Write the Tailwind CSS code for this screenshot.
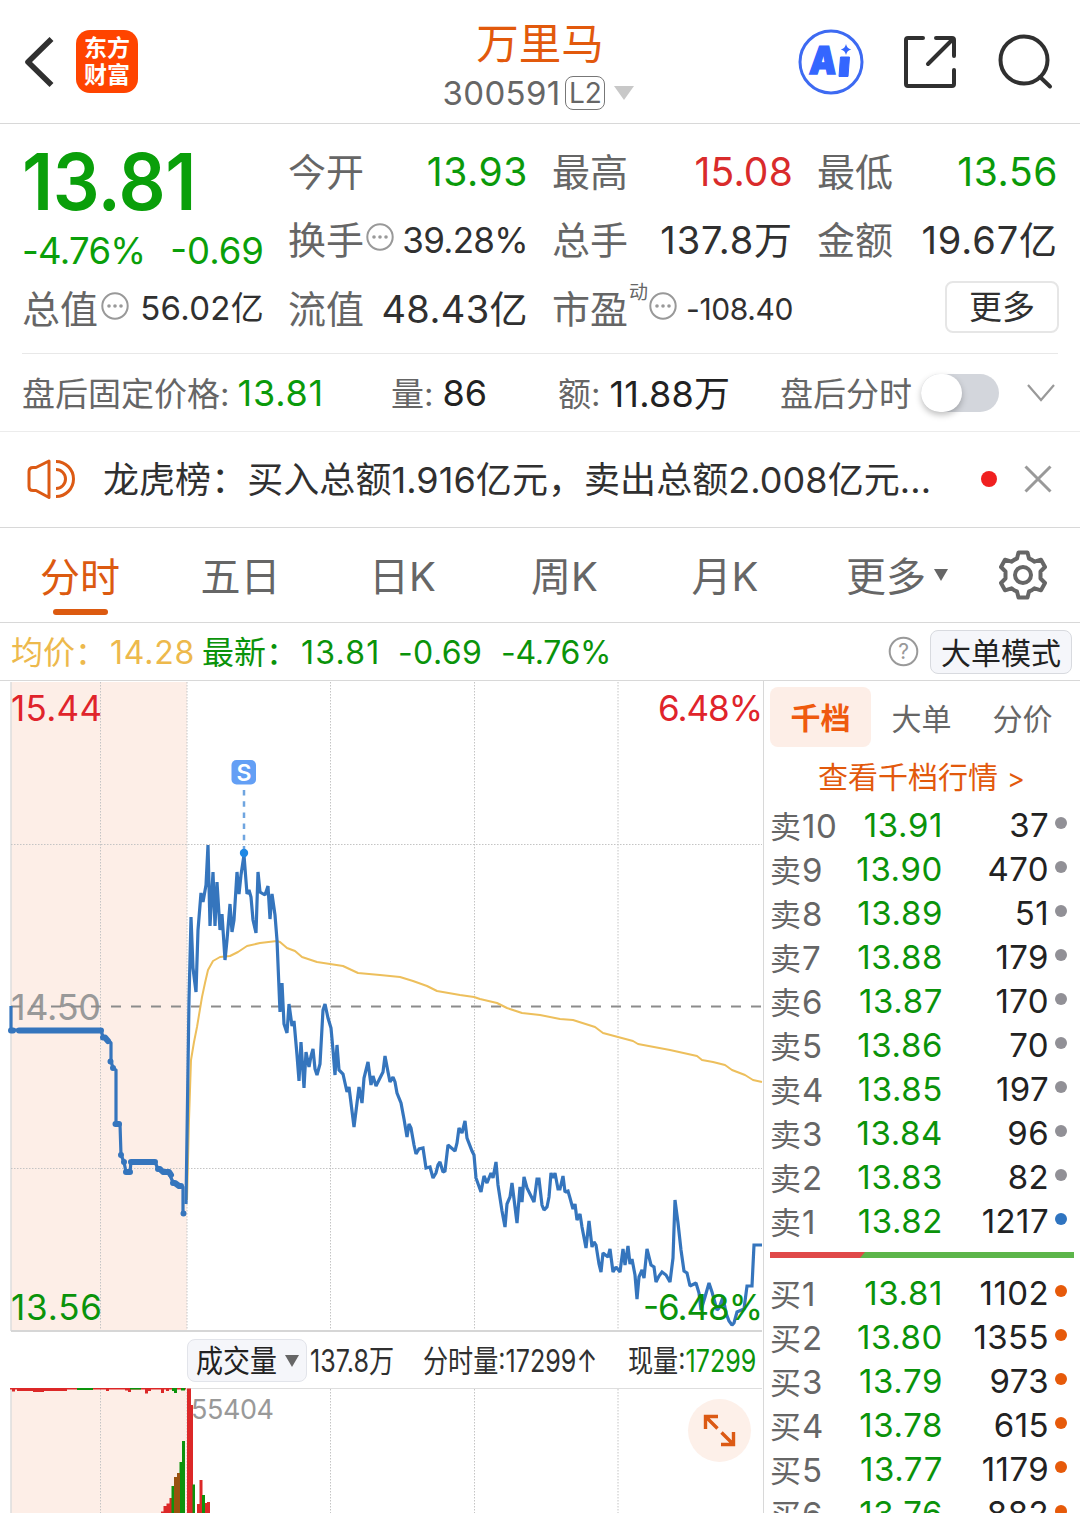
<!DOCTYPE html>
<html lang="zh-CN">
<head>
<meta charset="utf-8">
<title>万里马 300591</title>
<script src="https://cdn.jsdelivr.net/npm/@tailwindcss/browser@4"></script>
</head>
<body class="bg-white w-[1080px] h-[1513px] overflow-hidden font-['Inter','Noto_Sans_CJK_SC',sans-serif] text-[#303030] leading-none whitespace-nowrap">

<!-- title bar -->
<header class="h-[124px] border-b border-[#d8d8d8] grid grid-cols-[360px_1fr_360px]">
  <div class="flex items-center pl-6">
    <svg class="w-[30px] h-[52px]" viewBox="0 0 30 52" fill="none" stroke="#303030" stroke-width="5.600"><path d="M27.500 3L4 26l23.500 23" stroke-linejoin="round" stroke-linecap="butt"/></svg>
    <div class="ml-[22px] w-[62px] h-[63px] rounded-[14px] bg-[#ff4400] text-white font-bold text-[23px] leading-[27px] flex flex-col items-center justify-center"><span>东方</span><span>财富</span></div>
  </div>
  <div class="flex flex-col items-center">
    <div class="mt-[22px] h-[44px] leading-[44px] text-[42.500px] text-[#e2590c]">万里马</div>
    <div class="mt-[9px] -ml-[3px] flex items-center h-[36px] text-[33px] text-[#666] tracking-[0.3px]">300591<span class="ml-[5px] w-[40px] h-[34px] rounded-lg border-[1.5px] border-[#777] text-[28px] flex items-center justify-center tracking-normal">L2</span>
      <svg class="ml-[9px] w-[20px] h-[14px]" viewBox="0 0 20 14"><path d="M0 0h20L10 14z" fill="#c8c8c8"/></svg></div>
  </div>
  <div class="flex items-center pl-[78px]">
    <svg class="w-[66px] h-[66px]" viewBox="0 0 66 66"><circle cx="33" cy="33" r="31" fill="none" stroke="#3d6af2" stroke-width="3"/><g fill="#3466ff"><text x="10.500" y="45.500" font-family="Inter" font-weight="900" font-size="38" textLength="27" lengthAdjust="spacingAndGlyphs" transform="translate(3.500 0) skewX(-4)" stroke="#3466ff" stroke-width="1.500">A</text><path d="M42.500 28h9l-1.500 19.500h-9z" stroke="#3466ff" stroke-linejoin="round"/><path d="M48 15q1 4.700 5.200 5.500q-4.200 .8 -5.200 5.500q-1 -4.700 -5.200 -5.500q4.200 -.8 5.200 -5.500z"/></g></svg>
    <svg class="ml-[39px] w-[54px] h-[54px]" viewBox="0 0 54 54" fill="none" stroke="#303030" stroke-width="4" stroke-linecap="round"><path d="M20 3H5q-2 0-2 2v44q0 2 2 2h44q2 0 2-2V35M33 3h16q2 0 2 2v16M50 4L25 29" stroke-linejoin="round"/></svg>
    <svg class="ml-[41px] w-[56px] h-[56px]" viewBox="0 0 56 56" fill="none" stroke="#303030" stroke-width="4" stroke-linecap="round"><circle cx="26" cy="26" r="23.500"/><path d="M42 43l10 9.500"/></svg>
  </div>
</header>

<!-- quote figures -->
<section class="mx-[22px] pt-[13px] h-[230px] border-b border-[#e8e8e8] grid grid-cols-[242px_240px_241px_241px] grid-rows-[69px_68px_69px] gap-x-6 text-[38px] text-[#303030]">
  <div class="row-span-2 text-[#0a9f0a]">
    <div class="mt-px h-[88px] leading-[88px] text-[78px] font-semibold tracking-[-0.5px] origin-left scale-x-[0.945]">13.81</div>
    <div class="mt-[5px] h-[40px] leading-[40px] text-[36.500px] flex justify-between"><span class="tracking-[-0.7px]">-4.76%</span><span>-0.69</span></div>
  </div>
  <div class="flex items-center justify-between"><span class="text-[#666]">今开</span><span class="text-[39px] text-[#0a9a0a] tracking-[0.6px]">13.93</span></div>
  <div class="flex items-center justify-between"><span class="text-[#666]">最高</span><span class="text-[39px] text-[#d92b2b] tracking-[0.2px]">15.08</span></div>
  <div class="flex items-center justify-between"><span class="text-[#666]">最低</span><span class="text-[39px] text-[#0a9a0a] tracking-[0.6px]">13.56</span></div>
  <div class="flex items-center justify-between"><span class="flex items-center text-[#666]">换手<svg class="ml-px w-[30px] h-[30px] -mt-[6px]" viewBox="0 0 30 30"><circle cx="15" cy="15" r="12.700" fill="none" stroke="#999" stroke-width="2"/><g fill="#999"><circle cx="9" cy="15" r="1.800"/><circle cx="15" cy="15" r="1.800"/><circle cx="21" cy="15" r="1.800"/></g></svg></span><span class="text-[35px] tracking-[-0.7px]">39.28%</span></div>
  <div class="flex items-center justify-between"><span class="text-[#666]">总手</span><span class="tracking-[0.9px]">137.8万</span></div>
  <div class="flex items-center justify-between"><span class="text-[#666]">金额</span><span class="tracking-[0.9px]">19.67亿</span></div>
  <div class="flex items-center justify-between"><span class="flex items-center text-[#666]">总值<svg class="ml-[2px] w-[30px] h-[30px] -mt-[5px]" viewBox="0 0 30 30"><circle cx="15" cy="15" r="12.700" fill="none" stroke="#999" stroke-width="2"/><g fill="#999"><circle cx="9" cy="15" r="1.800"/><circle cx="15" cy="15" r="1.800"/><circle cx="21" cy="15" r="1.800"/></g></svg></span><span class="text-[33px] tracking-[0.3px]">56.02亿</span></div>
  <div class="flex items-center justify-between"><span class="text-[#666]">流值</span><span class="tracking-[0.4px]">48.43亿</span></div>
  <div class="flex items-center justify-between"><span class="flex items-center text-[#666]">市盈<sup class="ml-px text-[19px] mt-[3px] top-0 self-start">动</sup><svg class="w-[30px] h-[30px] -mt-[5px]" viewBox="0 0 30 30"><circle cx="15" cy="15" r="12.700" fill="none" stroke="#999" stroke-width="2"/><g fill="#999"><circle cx="9" cy="15" r="1.800"/><circle cx="15" cy="15" r="1.800"/><circle cx="21" cy="15" r="1.800"/></g></svg></span><span class="text-[30px] tracking-[-0.4px]">-108.40</span></div>
  <div class="flex items-center justify-end"><span class="w-[114px] h-[52px] -mt-[3px] -mr-px border-2 border-[#e6e6e6] rounded-lg text-[33px] flex items-center justify-center">更多</span></div>
</section>

<!-- after-hours row -->
<section class="h-[78px] border-b border-[#ececec] px-[22px] flex items-center text-[33px] text-[#666]">
  <div class="w-[369px] flex items-center"><span class="pt-[4px]">盘后固定价格:</span><span class="ml-[8px] text-[36px] text-[#0a9a0a] tracking-[0.8px]">13.81</span></div>
  <div class="w-[167px] flex items-center"><span class="pt-[4px]">量:</span><span class="ml-[9px] text-[36px] text-[#222]">86</span></div>
  <div class="w-[222px] flex items-center"><span class="pt-[4px]">额:</span><span class="ml-[9px] pt-[2px] text-[36px] text-[#222] tracking-[0.2px]">11.88万</span></div>
  <div class="flex items-center"><span class="pt-[4px]">盘后分时</span>
    <span class="ml-[9px] w-[78px] h-[38px] rounded-full bg-[#d3d6dc] flex items-center"><span class="w-[41px] h-[38px] rounded-full bg-white shadow-[0_3px_6px_rgba(0,0,0,0.25)]"></span></span>
    <svg class="ml-[28px] w-[28px] h-[18px]" viewBox="0 0 28 18" fill="none" stroke="#999" stroke-width="2.200"><path d="M1 1l13 15L27 1"/></svg></div>
</section>

<!-- news ticker -->
<section class="h-[96px] border-b border-[#d8d8d8] flex items-center pl-[27px] pb-[2px]">
  <svg class="w-[48px] h-[40px]" viewBox="0 0 48 40" fill="none" stroke="#dc5a14" stroke-width="3"><path d="M9 8.500h-3q-4 0-4 4v15q0 4 4 4h3l13 7V2zM29 2.500a17.500 17.500 0 0 1 0 35M29 10.500a9.500 9.500 0 0 1 0 19" stroke-linejoin="round"/></svg>
  <span class="ml-[28px] pt-[2px] w-[878px] text-[36px] tracking-[0.06px]">龙虎榜：买入总额1.916亿元，卖出总额2.008亿元...</span>
  <span class="w-[16px] h-[16px] rounded-full bg-[#f02020]"></span>
  <svg class="ml-[27px] w-[28px] h-[28px]" viewBox="0 0 28 28" stroke="#999" stroke-width="3"><path d="M1.500 1.500l25 25M26.500 1.500l-25 25"/></svg>
</section>

<!-- period tabs -->
<nav class="h-[95px] border-b border-[#d8d8d8] flex items-center text-[40px] text-[#666]">
  <div class="w-[160px] h-full flex flex-col items-center text-[#dc5a10]"><span class="mt-[26px] h-[48px] leading-[48px]">分时</span><span class="mt-[7px] w-[55px] h-[6px] rounded-full bg-[#dc5a10]"></span></div>
  <div class="w-[161px] pt-[4px] text-center">五日</div>
  <div class="w-[163px] pt-[4px] text-center">日K</div>
  <div class="w-[161px] pt-[4px] text-center">周K</div>
  <div class="w-[160px] pt-[4px] text-center">月K</div>
  <div class="ml-[41px] flex items-center"><span class="pt-[4px]">更多</span><svg class="ml-[8px] w-[14px] h-[12px]" viewBox="0 0 14 12"><path d="M0 0h14L7 12z" fill="#666"/></svg></div>
  <svg class="ml-[51px] w-[48px] h-[50px]" viewBox="-24 -25 48 50" fill="none" stroke="#666" stroke-width="4" stroke-linejoin="round"><circle r="8"/><path d="M-4.500 -22.500h9l1.500 6q3 1 5.500 3.200l6.500-2 4 7.300-4.500 4.500v7l4.500 4.500-4 7.300-6.500-2q-2.500 2.200-5.500 3.200l-1.500 6h-9l-1.500-6q-3-1-5.500-3.200l-6.500 2-4-7.300 4.500-4.500v-7l-4.500-4.500 4-7.300 6.500 2q2.500-2.200 5.500-3.200z"/></svg>
</nav>

<!-- latest price line -->
<section class="h-[58px] border-b border-[#d8d8d8] flex items-center text-[32px] text-[#0a930a] pl-[11px]">
  <span class="w-[191px] pt-[3px] text-[#edb94c]">均价：<span class="ml-[3px] tracking-[0.8px]">14.28</span></span>
  <span class="w-[196px] pt-[3px]">最新：<span class="ml-[3px] tracking-[1.2px]">13.81</span></span>
  <span class="w-[103px] pt-[2px] tracking-[0.4px]">-0.69</span>
  <span class="w-[387px] pt-[2px] tracking-[-0.3px]">-4.76%</span>
  <svg class="w-[31px] h-[31px]" viewBox="0 0 31 31"><circle cx="15.500" cy="15.500" r="13.800" fill="none" stroke="#999" stroke-width="2"/><text x="15.500" y="23" text-anchor="middle" font-family="Inter" font-size="21" fill="#999">?</text></svg>
  <span class="ml-[11px] pt-[3px] w-[142px] h-[44px] rounded-lg border border-[#d8dadf] bg-[#f5f6fa] text-[#222] text-[30px] flex items-center justify-center">大单模式</span>
</section>

<main class="flex h-[832px]">
  <!-- price and volume charts -->
  <div class="w-[764px] border-r border-[#d8d8d8] flex flex-col shrink-0">
    <svg class="w-[763px] h-[652px] shrink-0" viewBox="0 681 763 652" fill="none" font-family="Inter">
      <path fill="#fdeee7" d="M11 682h176v649H11z"/>
      <path d="M11 682v649" stroke="#ddd" stroke-width="1.500"/>
      <path d="M100.500 682v649M187 682v649M330.500 682v649M474.500 682v649M618 682v649M11 844.500h751M11 1168.500h751" stroke="#c4c4c4" stroke-dasharray="1.500 1.500"/>
      <path d="M11 1331h751" stroke="#d6d6d6" stroke-width="2"/>
      <text x="11" y="1020" font-size="36" fill="#999" textLength="90">14.50</text>
      <path d="M11 1006.500h751" stroke="#8c8c8c" stroke-width="2" stroke-dasharray="10 10"/>
      <path stroke="#edbf5c" stroke-width="2" stroke-linejoin="round" d="M187 1200L189 1120 191 1060 194 1042 197 1027 202 997 205 983 208 970 213 961 220 957 230 956 238 952 247 946 260 943 277 941 280 942 287 948 295 951 302 957 317 962 343 966 358 973 380 975 400 977 413 981 427 986 437 991 460 995 474 997 480 999 497 1003 507 1008 522 1013 540 1015 560 1019 573 1020 595 1027 603 1033 618 1037 633 1041 638 1044 670 1050 697 1056 702 1060 713 1062 725 1065 732 1070 745 1075 753 1080 762 1082"/>
      <g stroke="#3575bd" stroke-linejoin="round">
        <path stroke-width="3.200" d="M11 1006V1030H101L103 1037 108 1040 111 1043V1061L113 1068 116 1070V1124H120L121 1155 124 1162 126 1172H130L131 1162H155L158 1169 162 1172 169 1173 172 1180 174 1183 179 1186 183 1187V1214"/>
        <path stroke-width="6" stroke-linecap="round" d="M11 1030.500H13M19 1030.500H101M103 1037.500H105L108 1041M110.500 1061.500v.01M113 1068v.01M115.500 1124H119M121 1155v.01M124 1162v.01M126 1172H130M131 1162H155M158 1169H160L163 1172H169L171 1175M173 1183H175L179 1186H181M183.500 1213.500v.01"/>
        <path stroke-width="3.200" stroke-linejoin="miter" stroke-miterlimit="1.500" d="M186 1204L189 1000 191 917 193 968 196 992 198 930 201 893 203 902 206 885 208 845 210 926 213 872 215 926 217 882 220 930 222 914 225 960 227 940 230 904 232 932 234 920 237 872 239 894 241 875 244 855 247 894 249 890 251 897 253 920 256 933 258 872 260 892 265 895 268 886 270 919 272 894 275 915 277 940 280 1012 282 983 284 1024 287 1033 289 1004 292 1026 294 1021 297 1055 299 1081 301 1042 304 1088 306 1052 309 1067 311 1056 313 1049 315 1069 317 1075 320 1064 323 1010 325 1004 328 1018 331 1028 333 1050 335 1075 337 1045 339 1070 343 1074 347 1092 349 1087 351 1103 354 1127 359 1087 362 1103 364 1078 368 1062 371 1085 373 1076 376 1086 383 1072 385 1056 388 1072 390 1082 393 1077 395 1082 397 1093 401 1103 404 1119 407 1137 409 1124 411 1128 414 1145 416 1154 419 1149 423 1148 426 1168 430 1167 433 1178 436 1173 438 1165 440 1162 443 1172 445 1171 448 1145 455 1151 457 1143 459 1128 462 1133 465 1121 467 1138 472 1151 474 1155 476 1178 481 1192 484 1176 487 1183 491 1173 493 1178 496 1162 498 1185 502 1211 505 1227 507 1204 510 1197 512 1183 517 1223 520 1187 522 1202 524 1177 527 1188 534 1202 537 1179 539 1179 542 1205 544 1210 547 1207 549 1197 551 1173 553 1178 555 1173 558 1189 560 1189 563 1176 565 1192 568 1191 570 1198 573 1209 575 1204 577 1220 580 1214 582 1227 586 1248 589 1221 592 1247 594 1242 596 1245 599 1264 601 1272 603 1253 608 1257 610 1249 613 1272 616 1267 620 1272 623 1249 625 1265 628 1246 630 1264 632 1259 635 1275 637 1299 639 1277 642 1270 644 1278 647 1249 651 1265 654 1267 656 1282 659 1276 662 1272 666 1275 670 1282 673 1258 675 1200 678 1223 681 1250 684 1271 687 1273 690 1286 696 1283 699 1293 701 1310 705 1297 709 1283 712 1292 717 1310 719 1308 723 1297 726 1313 729 1321 732 1325 734 1323 737 1312 744 1309 747 1286 752 1286 754 1245 762 1245"/>
      </g>
      <path d="M244 790v60" stroke="#6fa5e0" stroke-width="2.500" stroke-dasharray="5.500 5.700"/>
      <circle cx="244" cy="853" r="4.200" fill="#1e88e5"/>
      <rect x="231.500" y="760" width="24.500" height="24.500" rx="5" fill="#639ff5"/>
      <text x="244" y="780.500" font-size="23" font-weight="600" fill="#fff" text-anchor="middle">S</text>
      <text x="11" y="721" font-size="35" fill="#e0242b" textLength="91">15.44</text>
      <text x="658" y="721" font-size="35" fill="#e0242b" textLength="105">6.48%</text>
      <text x="11" y="1320" font-size="35" fill="#0a930a" textLength="91">13.56</text>
      <text x="643" y="1320" font-size="35" fill="#0a930a" textLength="120">-6.48%</text>
    </svg>
    <div class="h-[55px] shrink-0 flex items-center pl-[187px] text-[31px]">
      <span class="w-[120px] h-[43px] rounded-lg border border-[#e2e4ea] bg-[#f5f6fa] flex items-center pl-[8px] shrink-0"><span class="w-[89px] inline-block origin-left scale-x-[0.87] text-[#222]">成交量</span><svg class="w-[14px] h-[12px]" viewBox="0 0 14 12"><path d="M0 0h14L7 12z" fill="#666"/></svg></span>
      <span class="ml-[3px] w-[113px] shrink-0 origin-left scale-x-[0.81]">137.8万</span>
      <span class="w-[205px] shrink-0 origin-left scale-x-[0.81]">分时量:17299↑</span>
      <span class="shrink-0 origin-left scale-x-[0.81]">现量:<span class="text-[#0a930a]">17299</span></span>
    </div>
    <svg class="w-[763px] h-[125px] shrink-0" viewBox="0 1388 763 125" fill="none">
      <path fill="#fdeee7" d="M11 1388h176v125H11z"/>
      <path d="M11 1388.500h751" stroke="#dedede"/>
      <path d="M11 1389v124" stroke="#ddd" stroke-width="1.500"/>
      <path d="M100.500 1389v124M187 1389v124M330.500 1389v124M474.500 1389v124M618 1389v124" stroke="#c4c4c4" stroke-dasharray="1.500 1.500"/>
      <g fill="#dc2828">
        <path d="M10 1388h176v1.500H10zM12 1388h3v3.500h-3zM17 1388h50v3H17zM33 1388h11v4H33zM106 1388h3v3h-3zM125 1388h5v2.500h-5zM128 1388h3v4h-3zM145 1388h3v5.500h-3zM148 1388h3v3h-3zM161 1388h3v5h-3zM166 1388h3v3h-3z"/>
        <path d="M187 1388.500h4v125h-4zM189 1405h4v108h-4zM199.500 1480h3v33h-3zM197 1504h3v9h-3zM205 1503h2.500v10h-2.500zM207 1502h3v11h-3z"/>
        <path d="M161 1511.500h3v2h-3zM163.500 1506h3v7h-3zM166.500 1503.500h3v10h-3zM169.500 1498h3v15h-3z"/>
      </g>
      <g fill="#0c930c"><path d="M182 1441h3v72h-3zM179.500 1462h3v51h-3zM171.500 1486h3v27h-3zM192.500 1484.500h2.500v29h-2.500zM202 1495h3v18h-3zM77 1388h16v2H77zM130 1388h11v1.500h-11zM172 1388h4v3h-4zM174 1388h3v5h-3zM181 1388h4v2.500h-4z"/></g>
      <path fill="#98520f" d="M174 1477h3v36h-3zM177 1473h3v40h-3z"/>
      <text x="191" y="1419" font-family="Inter" font-size="27" fill="#999" textLength="83">55404</text>
      <circle cx="719.500" cy="1430.500" r="31.500" fill="#fdf0e9"/>
      <g stroke="#dc5a14" stroke-width="3.400"><path d="M705.500 1429v-12.500h12.500M706 1417l11.500 11.500M733.500 1432v12.500H721M733 1444l-11.500-11.500"/></g>
    </svg>
  </div>

  <!-- order book -->
  <aside class="w-[316px] pl-[6px] pt-[6px] overflow-hidden">
    <div class="flex text-[30px] text-[#666] h-[60px] items-center">
      <span class="w-[101px] h-[60px] pt-[2px] rounded-lg bg-[#fdeee7] text-[#ef5a0e] font-bold flex items-center justify-center">千档</span>
      <span class="w-[101px] pt-[3px] text-center">大单</span>
      <span class="w-[101px] pt-[3px] text-center">分价</span>
    </div>
    <div class="h-[56px] flex items-center pl-[48px] pt-[3px] text-[30px] text-[#e2590c]">查看千档行情<span class="ml-[9px] pt-[3px] text-[27px]">&gt;</span></div>
    <div id="asks"></div>
    <div class="mt-[9px] mb-[13px] w-[304px] h-[6px] flex bg-[#5cb54a]"><span class="w-[95px] bg-[#e04848] [clip-path:polygon(0_0,100%_0,90px_100%,0_100%)]"></span></div>
    <div id="bids"></div>
  </aside>
</main>

<script>
const asks = [['卖','10','13.91',37],['卖','9','13.90',470],['卖','8','13.89',51],['卖','7','13.88',179],['卖','6','13.87',170],['卖','5','13.86',70],['卖','4','13.85',197],['卖','3','13.84',96],['卖','2','13.83',82],['卖','1','13.82',1217]];
const bids = [['买','1','13.81',1102],['买','2','13.80',1355],['买','3','13.79',973],['买','4','13.78',615],['买','5','13.77',1179],['买','6','13.76',882]];
const row = (r, dot) => `<div class="h-[44px] flex items-center text-[33px]">
  <span class="w-[80px] pt-[3px] text-[31px] text-[#666]">${r[0]}<span class="text-[33px] ml-px tracking-[0.5px]">${r[1]}</span></span>
  <span class="w-[93px] text-right text-[#0a930a] tracking-[0.6px]">${r[2]}</span>
  <span class="w-[106px] text-right text-[#222] tracking-[0.4px]">${r[3]}</span>
  <span class="ml-[6px] mb-[4px] w-[12px] h-[12px] rounded-full ${dot}"></span></div>`;
document.getElementById('asks').innerHTML = asks.map((r, i) => row(r, i === 9 ? 'bg-[#2f74c0]' : 'bg-[#919096]')).join('');
document.getElementById('bids').innerHTML = bids.map(r => row(r, 'bg-[#e65a0a]')).join('');
</script>
</body>
</html>
